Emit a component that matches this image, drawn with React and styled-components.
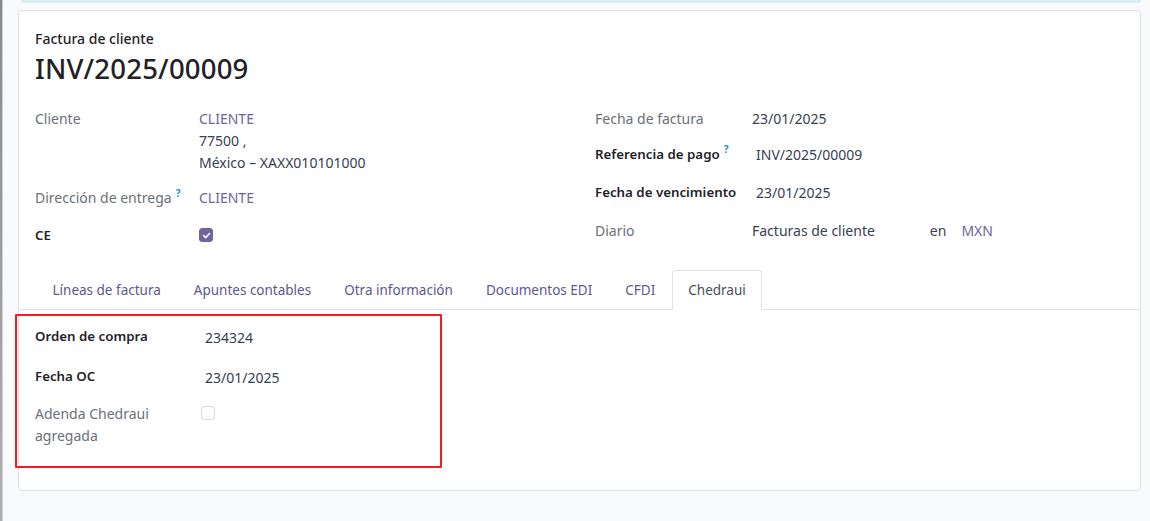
import styled, { createGlobalStyle } from "styled-components";

const GlobalStyle = createGlobalStyle`
  html, body {
    margin: 0;
    padding: 0;
    background: #f9fafb;
    font-family: "Noto Sans", "Open Sans", sans-serif;
    font-size: 14px;
    color: #374151;
  }
`;

const Page = styled.div`
  display: flex;
  width: 1150px;
  height: 521px;
  overflow: hidden;
`;

const SideStrip = styled.div`
  width: 2px;
  flex: none;
  background: linear-gradient(#8a8a8a, #b0b0b0);
  border-right: 1px solid #d0d0d0;
`;

const Main = styled.div`
  flex: 1;
  padding: 0 9px 0 15px;
`;

const AlertEdge = styled.div`
  height: 3px;
  margin: 0 0 7px 3px;
  background: #d5eff4;
  border-radius: 0 0 4px 4px;
`;

const Card = styled.div`
  background: #fff;
  border: 1px solid #dee2e6;
  border-radius: 4px;
  height: 481px;
  box-sizing: border-box;
  padding-top: 18px;
`;

const Header = styled.div`
  padding: 0 16px;
`;

const Subtitle = styled.div`
  font-size: 14px;
  font-weight: 500;
  color: #1f2328;
  line-height: 20px;
`;

const Title = styled.h1`
  margin: 2px 0 0;
  font-size: 27.5px;
  font-weight: 500;
  color: #1f2328;
  line-height: 36px;
  letter-spacing: 0.2px;
`;

const Groups = styled.div`
  display: grid;
  grid-template-columns: 560px 1fr;
  padding: 21px 16px 0;
`;

const Group = styled.div`
  display: flex;
  flex-direction: column;
`;

const Row = styled.div`
  display: grid;
  grid-template-columns: ${(p) => p.$labelWidth || 164}px 1fr;
  height: ${(p) => p.$h}px;
  align-items: start;
`;

const Label = styled.div`
  line-height: 22px;
  color: ${(p) => (p.$strong ? "#1f2328" : "#6b7079")};
  font-weight: ${(p) => (p.$strong ? 600 : 400)};
  font-size: ${(p) => (p.$strong ? "13.3px" : "14px")};
`;

const Help = styled.span`
  position: relative;
  top: -6px;
  line-height: 0;
  color: #1b96c0;
  font-size: 10px;
  font-weight: 700;
  margin-left: 4px;
`;

const Value = styled.div`
  line-height: 22px;
  color: #374151;
  padding-left: ${(p) => p.$pad || 0}px;
  margin-top: ${(p) => p.$top || 0}px;
  display: flex;
  flex-direction: column;
`;

const Inline = styled.div`
  display: flex;
  align-items: center;
`;

const Link = styled.span`
  color: #71639e;
`;

const Spacer = styled.span`
  display: inline-block;
  width: ${(p) => p.$w}px;
`;

const CheckBox = styled.span`
  display: inline-flex;
  align-items: center;
  justify-content: center;
  width: 14px;
  height: 14px;
  box-sizing: border-box;
  border-radius: 3px;
  margin: ${(p) => p.$margin || "4px 0 0 0"};
  background: ${(p) => (p.$checked ? "#71639e" : "#fff")};
  border: 1px solid ${(p) => (p.$checked ? "#71639e" : "#d8dadd")};
`;

const TabBar = styled.div`
  display: flex;
  margin-top: 16px;
  padding-left: 17px;
  border-bottom: 1px solid #dee2e6;
  height: 39px;
  box-sizing: content-box;
`;

const Tab = styled.div`
  padding: 0 15.5px;
  line-height: 38px;
  font-size: 13.5px;
  color: ${(p) => (p.$active ? "#495057" : "#5e5790")};
  border: 1px solid ${(p) => (p.$active ? "#dee2e6" : "transparent")};
  border-bottom: 1px solid ${(p) => (p.$active ? "#fff" : "transparent")};
  border-radius: 4px 4px 0 0;
  background: ${(p) => (p.$active ? "#fff" : "transparent")};
  margin-bottom: -1px;
`;

const Highlight = styled.div`
  margin: 4px 0 0 -4px;
  width: 427px;
  height: 154px;
  box-sizing: border-box;
  border: 2px solid #f21d1d;
  border-radius: 1px;
  padding: 9px 0 0 18px;
`;

const SubRow = styled.div`
  display: grid;
  grid-template-columns: 170px 1fr;
  height: ${(p) => p.$h}px;
  align-items: start;
`;

const Check = () => (
  <svg width="9" height="9" viewBox="0 0 10 10">
    <path d="M1.8 5.2 L4 7.3 L8.3 2.8" fill="none" stroke="#fff" strokeWidth="1.8" strokeLinecap="round" strokeLinejoin="round" />
  </svg>
);

const tabs = ["Líneas de factura", "Apuntes contables", "Otra información", "Documentos EDI", "CFDI", "Chedraui"];

export default function App() {
  return (
    <>
      <GlobalStyle />
      <Page>
        <SideStrip />
        <Main>
          <AlertEdge />
          <Card>
            <Header>
              <Subtitle>Factura de cliente</Subtitle>
              <Title>INV/2025/00009</Title>
            </Header>
            <Groups>
              <Group>
                <Row $h={79}>
                  <Label>Cliente</Label>
                  <Value>
                    <Link>CLIENTE</Link>
                    <span>77500 ,</span>
                    <span>México – XAXX010101000</span>
                  </Value>
                </Row>
                <Row $h={37}>
                  <Label>
                    Dirección de entrega<Help>?</Help>
                  </Label>
                  <Value>
                    <Link>CLIENTE</Link>
                  </Value>
                </Row>
                <Row $h={30}>
                  <Label $strong>CE</Label>
                  <Value>
                    <CheckBox $checked>
                      <Check />
                    </CheckBox>
                  </Value>
                </Row>
              </Group>
              <Group>
                <Row $h={35} $labelWidth={157}>
                  <Label>Fecha de factura</Label>
                  <Value>23/01/2025</Value>
                </Row>
                <Row $h={38} $labelWidth={157}>
                  <Label $strong>
                    Referencia de pago<Help>?</Help>
                  </Label>
                  <Value $pad={4} $top={1}>INV/2025/00009</Value>
                </Row>
                <Row $h={39} $labelWidth={157}>
                  <Label $strong>Fecha de vencimiento</Label>
                  <Value $pad={4} $top={1}>23/01/2025</Value>
                </Row>
                <Row $h={30} $labelWidth={157}>
                  <Label>Diario</Label>
                  <Value>
                    <Inline>
                      <span>Facturas de cliente</span>
                      <Spacer $w={55} />
                      <span>en</span>
                      <Spacer $w={15} />
                      <Link>MXN</Link>
                    </Inline>
                  </Value>
                </Row>
              </Group>
            </Groups>
            <TabBar>
              {tabs.map((t) => (
                <Tab key={t} $active={t === "Chedraui"}>
                  {t}
                </Tab>
              ))}
            </TabBar>
            <Highlight>
              <SubRow $h={40}>
                <Label $strong>Orden de compra</Label>
                <Value $top={2}>234324</Value>
              </SubRow>
              <SubRow $h={38}>
                <Label $strong>Fecha OC</Label>
                <Value $top={2}>23/01/2025</Value>
              </SubRow>
              <SubRow $h={50}>
                <Label>
                  Adenda Chedraui
                  <br />
                  agregada
                </Label>
                <Value>
                  <CheckBox $margin="3px 0 0 -4px" />
                </Value>
              </SubRow>
            </Highlight>
          </Card>
        </Main>
      </Page>
    </>
  );
}
